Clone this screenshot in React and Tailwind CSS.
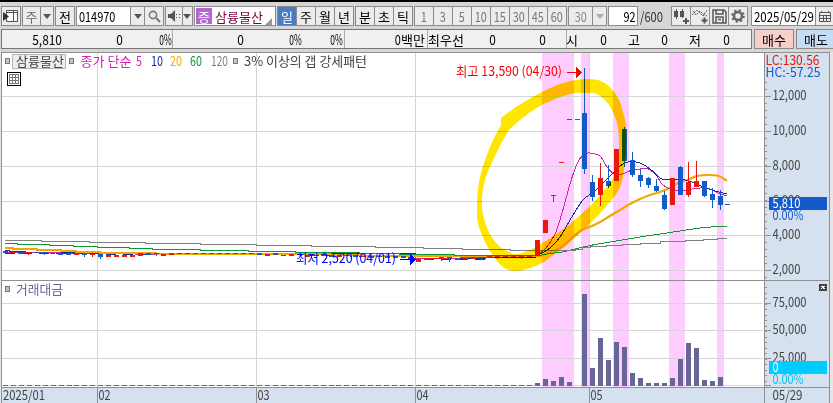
import React from "react";

const FONT = "font-['Noto_Sans_CJK_KR',sans-serif]";

// Smooth curve through a list of points
function curve(points, closed = false) {
  const n = points.length;
  const at = (i) => (closed ? points[(i + n) % n] : points[Math.max(0, Math.min(n - 1, i))]);
  let d = `M${points[0][0]} ${points[0][1]}`;
  for (let i = 0; i < (closed ? n : n - 1); i++) {
    const [a, b, c, e] = [at(i - 1), at(i), at(i + 1), at(i + 2)];
    d += `C${b[0] + (c[0] - a[0]) / 6} ${b[1] + (c[1] - a[1]) / 6} ${c[0] - (e[0] - b[0]) / 6} ${c[1] - (e[1] - b[1]) / 6} ${c[0]} ${c[1]}`;
  }
  return closed ? d + "Z" : d;
}

const steps = (points) =>
  points.map(([x, y], i) => (i ? `H${x}V${y}` : `M${x} ${y}`)).join("");

const RED = "#e8190c";
const BLUE = "#145acb";

// x, body top, body bottom, wick top, wick bottom, colour
const candles = [
  [535, 240, 255, 240, 255, RED],
  [543, 220, 233, 220, 233, RED],
  [582, 113, 169, 68, 174, BLUE],
  [590, 182, 197, 175, 201, BLUE],
  [598, 178, 195, 163, 206, RED],
  [606, 181, 186, 165, 188, BLUE],
  [614, 149, 181, 149, 181, RED],
  [622, 129, 161, 127, 167, BLUE],
  [630, 160, 175, 152, 177, BLUE],
  [638, 175, 181, 169, 187, BLUE],
  [646, 178, 185, 177, 188, BLUE],
  [654, 186, 191, 179, 192, BLUE],
  [662, 195, 209, 191, 210, BLUE],
  [670, 178, 205, 178, 205, RED],
  [678, 167, 195, 166, 195, BLUE],
  [686, 182, 195, 162, 197, RED],
  [694, 181, 187, 161, 187, RED],
  [702, 181, 196, 181, 197, BLUE],
  [710, 194, 200, 188, 208, BLUE],
  [718, 196, 205, 190, 210, BLUE],
];

// Quiet period: x, y, height, colour, wick
const flat = [
  [3, 251, 2, BLUE], [10, 252, 1, RED], [18, 252, 2, BLUE], [26, 252, 1, RED, 2], [34, 252, 1, BLUE], [42, 252, 1, BLUE, 2],
  [50, 253, 1, BLUE], [58, 253, 2, BLUE], [66, 253, 2, BLUE], [74, 253, 2, RED], [82, 254, 1, BLUE, 2], [90, 254, 1, RED, 2],
  [98, 254, 3, BLUE, 2], [106, 255, 2, RED], [114, 255, 2, RED], [122, 255, 2, RED], [130, 255, 2, RED], [138, 253, 3, RED],
  [146, 253, 2, BLUE], [154, 253, 1, BLUE, 2], [161, 254, 2, RED], [169, 253, 2, RED], [177, 253, 1, BLUE], [185, 253, 1, BLUE],
  [193, 253, 1, RED], [201, 253, 1, RED], [209, 253, 1, BLUE], [217, 253, 1, RED], [225, 253, 1, BLUE], [233, 253, 1, BLUE],
  [241, 253, 1, RED], [249, 253, 1, BLUE], [257, 253, 2, BLUE], [265, 254, 2, RED], [273, 253, 2, BLUE], [281, 255, 1, BLUE],
  [289, 254, 2, RED], [297, 254, 1, BLUE], [305, 255, 2, RED], [313, 255, 1, RED], [321, 254, 2, BLUE], [329, 255, 2, BLUE],
  [337, 255, 2, RED], [345, 255, 1, BLUE], [353, 255, 2, BLUE], [361, 256, 1, RED], [369, 256, 2, BLUE], [377, 256, 1, BLUE],
  [385, 256, 2, BLUE], [393, 256, 2, BLUE], [401, 256, 2, BLUE], [408, 257, 3, BLUE], [416, 259, 3, RED], [424, 258, 2, RED],
  [432, 258, 1, RED], [439, 257, 2, RED, 2], [447, 257, 2, BLUE, 3], [455, 258, 2, BLUE], [463, 258, 1, RED], [471, 257, 2, RED],
  [479, 257, 1, RED, 2], [487, 256, 2, RED], [495, 256, 1, RED, 2], [503, 256, 1, RED], [511, 256, 1, RED], [519, 256, 1, RED, 2],
  [527, 255, 2, RED],
];

const volumes = [
  [519, 385], [527, 385], [535, 383], [543, 379], [551, 381], [559, 377], [567, 382], [582, 294],
  [590, 368], [598, 338], [606, 360], [614, 342], [622, 347], [630, 373], [638, 378],
  [646, 383], [654, 383], [662, 383], [670, 378], [678, 359], [686, 343], [694, 348],
  [702, 380], [710, 381], [718, 377],
];

const bands = [[542, 32], [581, 8], [613, 16], [669, 16], [717, 7]];
const priceGrid = [[96, "12,000"], [131, "10,000"], [166, "8,000"], [201, "6,000"], [235, "4,000"], [270, "2,000"]];
const volumeGrid = [[303, "75,000"], [330, "50,000"], [358, "25,000"]];
const months = [[97, "02"], [256, "03"], [415, "04"], [589, "05"]];

const marker = [
  [501, 118], [519, 105], [542, 92], [563, 83], [585, 79], [603, 82], [617, 96], [623, 112], [626, 127],
  [626, 145], [625, 160], [620, 187], [603, 210], [580, 233], [560, 250], [542, 263], [530, 268], [516, 271],
  [503, 267], [490, 251], [479, 227], [477, 207], [480, 177], [490, 147], [501, 125],
];
const markerInner = [
  [513, 126], [540, 106], [570, 94], [585, 93], [597, 94], [609, 105], [617, 123], [619, 143], [618, 160],
  [613, 178], [602, 193], [590, 206], [570, 224], [555, 235], [542, 243], [530, 250], [517, 254], [509, 252],
  [498, 245], [488, 230], [482, 207], [485, 180], [497, 152], [505, 137],
];

const ma5 = [[535, 256], [545, 249], [555, 234], [562, 213], [570, 184], [577, 164], [583, 155], [588, 153], [595, 154], [601, 157], [607, 167], [613, 173], [622, 174], [632, 170], [640, 169], [648, 169], [656, 175], [662, 184], [668, 188], [678, 191], [686, 190], [700, 188], [710, 189], [718, 193], [727, 196]];
const ma10 = [[540, 254], [550, 248], [560, 237], [570, 220], [580, 204], [585, 198], [595, 191], [602, 184], [612, 174], [620, 166], [628, 162], [640, 163], [650, 169], [660, 178], [665, 180], [675, 179], [685, 180], [695, 183], [703, 187], [715, 191], [727, 194]];
const ma20 = [[540, 256], [551, 252], [562, 247], [572, 238], [582, 230], [592, 226], [600, 222], [610, 216], [620, 210], [630, 204], [640, 199], [650, 195], [660, 192], [670, 188], [678, 183], [690, 179], [697, 176], [708, 175], [719, 176], [727, 181]];

function Label({ x, y, w, fill = "#444", size = 13, children }) {
  return (
    <text x={x} y={y} textLength={w} lengthAdjust="spacingAndGlyphs" fill={fill} fontSize={size}>
      {children}
    </text>
  );
}

function Bullet({ x, y }) {
  return <rect x={x + 0.5} y={y + 0.5} width="4" height="5" fill="#c4c4c4" stroke="#777" />;
}

function Ticks({ from, to, step }) {
  const ys = [];
  for (let y = from; y <= to; y += step) ys.push(Math.round(y));
  return ys.map((y) => <rect key={y} x="765" y={y} width="2" height="1" fill="#909090" />);
}

function Chart() {
  return (
    <svg width="833" height="351" viewBox="0 52 833 351" shapeRendering="crispEdges" className={`block shrink-0 ${FONT}`}>
      <rect x="0" y="52" width="833" height="351" fill="#e6e6e6" />
      <rect x="2" y="53" width="762" height="334" fill="#fff" />
      {bands.map(([x, w]) => <rect key={x} x={x} y="53" width={w} height="334" fill="#ffccff" />)}
      <g fill="#d5d5d5">
        {[...priceGrid, ...volumeGrid, [385]].map(([y]) => <rect key={y} x="2" y={y} width="761" height="1" />)}
        {months.map(([x]) => <rect key={x} x={x} y="53" width="1" height="334" />)}
      </g>
      <rect x="765" y="53" width="64" height="350" fill="#d6e1ef" />
      <rect x="2" y="388" width="762" height="15" fill="#d6e1ef" />

      <g fill="#666699">
        {Array.from({ length: 65 }, (_, i) => <rect key={i} x={Math.round(3 + i * 7.94)} y="385" width="5" height="1" />)}
        {volumes.map(([x, y]) => <rect key={x} x={x} y={y} width="5" height={386 - y} />)}
      </g>

      <g fill="none">
        <path stroke="#1a2aa0" d="M5 250H9V251H25V252H90V253H415V258H485V257H535V256" />
        <path stroke="#d41fb4" d="M8 252H60V253H135V254H330V255H415V258H460V257H500V256H535" />
        <path stroke="#1a2aa0" strokeDasharray="10 7" d="M5 253H99V254H160V254H300V255H350V256H410V259H485V257H535" />
        <path stroke="#f0a800" strokeWidth="2" d={steps([[5, 248], [13, 248], [13, 249], [37, 250], [61, 251], [76, 252], [100, 253], [156, 254], [256, 254], [330, 255], [365, 256], [440, 256], [540, 256]])} />
        <path stroke="#f0a800" strokeWidth="2.2" shapeRendering="auto" d={curve(ma20)} />
        <path stroke="#0d9838" d={steps([[5, 243.5], [17, 244.5], [49, 245.5], [73, 246.5], [97, 247.5], [129, 248.5], [152, 249.5], [200, 250.5], [248, 251.5], [295, 252.5], [359, 253.5], [399, 254.5], [454, 255.5], [540, 255.5]])} />
        <path stroke="#0d9838" d={curve([[540, 255.5], [550, 253.5], [562, 252], [575, 249], [590, 245.5], [610, 242], [640, 237], [660, 234], [680, 231], [700, 228], [718, 226.5], [727, 226.5]])} />
        <path stroke="#808080" d={steps([[5, 240.5], [41, 241.5], [89, 242.5], [145, 243.5], [200, 244.5], [256, 245.5], [311, 246.5], [375, 247.5], [423, 248.5], [462, 249.5], [510, 250.5], [575, 249.5], [582, 247.5], [590, 246.5], [606, 245.5], [622, 244.5], [640, 243.5], [660, 241.5], [685, 240.5], [703, 239.5], [717, 238.5], [727, 238.5]])} />
        <path stroke="#d41fb4" d={curve(ma5)} />
        <path stroke="#1a2aa0" d={curve(ma10)} />
      </g>

      {flat.map(([x, y, h, color, wick]) => (
        <g key={x} fill={color}>
          <rect x={x} y={y} width="5" height={h} />
          {wick && <rect x={x + 2} y={y} width="1" height={h + wick} />}
        </g>
      ))}
      {candles.map(([x, top, bottom, high, low, color]) => (
        <g key={x} fill={color}>
          <rect x={x + 2} y={high} width="1" height={low - high} />
          <rect x={x} y={top} width="5" height={bottom - top} />
        </g>
      ))}
      <g fill={RED}>
        <rect x="551" y="195" width="5" height="1" />
        <rect x="553" y="195" width="1" height="7" />
        <rect x="559" y="162" width="5" height="1" />
        <rect x="567" y="119" width="5" height="1" />
        <rect x="575" y="119" width="5" height="1" />
      </g>
      <rect x="725" y="204" width="5" height="1" fill={BLUE} />

      <path
        d={`${curve(marker)}Z ${curve(markerInner, true)}`}
        fill="#ffe600" fillRule="evenodd" shapeRendering="auto" className="mix-blend-multiply"
      />

      <g fill="#909090">
        <rect x="1" y="52" width="829" height="1" />
        <rect x="1" y="52" width="1" height="351" />
        <rect x="764" y="52" width="1" height="351" />
        <rect x="829" y="52" width="1" height="351" />
        <rect x="2" y="280" width="828" height="1" />
        <rect x="2" y="387" width="828" height="1" />
        {months.map(([x]) => <rect key={x} x={x} y="388" width="1" height="15" />)}
        {[...priceGrid, ...volumeGrid, [385]].map(([y]) => <rect key={y} x="765" y={y} width="6" height="1" />)}
        <Ticks from={82} to={279} step={6.95} />
        <Ticks from={287} to={384} step={5.5} />
      </g>

      {[...priceGrid, ...volumeGrid].map(([y, t]) => (
        <Label key={t} x={772.5} y={y + 4} w={t.length === 6 ? 34 : 28}>{t}</Label>
      ))}
      <Label x={765.5} y={65} w={54} fill={RED}>LC:130.56</Label>
      <Label x={765.5} y={77} w={55} fill={BLUE}>HC:-57.25</Label>
      <rect x="769" y="197" width="58" height="13" fill={BLUE} />
      <Label x={772.5} y={208} w={28} fill="#fff">5,810</Label>
      <Label x={772.5} y={220} w={31} fill={BLUE}>0.00%</Label>
      <rect x="769" y="361" width="58" height="13" fill="#00ccff" />
      <Label x={772.5} y={372} w={6} fill="#fff">0</Label>
      <Label x={772.5} y={384} w={31} fill="#00c4f4">0.00%</Label>
      <rect x="819" y="284" width="8" height="7" fill="#444" />
      <path d="M821 286l4 3m0-3l-4 3" stroke="#fff" />

      <Label x={3} y={400} w={42}>2025/01</Label>
      {months.map(([x, t]) => <Label key={t} x={x + 1.5} y={400} w={12}>{t}</Label>)}
      <Label x={772.5} y={400} w={30}>05/29</Label>

      <Bullet x={5} y={58} />
      <rect x="12.5" y="54.5" width="53" height="14" fill="#ececec" stroke="#b8b8b8" />
      <Label x={16} y={66} w={48}>삼륭물산</Label>
      <Bullet x={69} y={58} />
      <Label x={80.5} y={66} w={51} fill="#d41fb4">종가 단순</Label>
      <Label x={136} y={66} w={6} fill="#d41fb4">5</Label>
      <Label x={151} y={66} w={12} fill="#1a2aa0">10</Label>
      <Label x={170} y={66} w={12} fill="#f0a800">20</Label>
      <Label x={190} y={66} w={12} fill="#0d9838">60</Label>
      <Label x={211} y={66} w={17} fill="#808080">120</Label>
      <Bullet x={233} y={58} />
      <Label x={244} y={66} w={123}>3% 이상의 갭 강세패턴</Label>
      <rect x="7.5" y="72.5" width="13" height="13" fill="#fff" stroke="#000" />
      <path d="M9.5 74.5h9v9h-9zM9.5 77.5h9M9.5 80.5h9M12.5 74.5v9M15.5 74.5v9" fill="none" stroke="#777" />

      <Label x={456} y={76} w={106} fill="#f00">최고 13,590 (04/30)</Label>
      <path d="M567 72.5h10" stroke="#f00" />
      <path d="M576 67l6 5.5l-6 5.5z" fill="#f00" />
      <Label x={296} y={263} w={100} fill="#00f">최저 2,520 (04/01)</Label>
      <path d="M400 259.5h11" stroke="#00f" />
      <path d="M410 254l6 5.5l-6 5.5z" fill="#00f" />
      <Bullet x={5} y={286} />
      <Label x={16} y={294} w={47} fill="#666699">거래대금</Label>
    </svg>
  );
}

function Group({ className = "", children }) {
  return <div className={`flex h-5 shrink-0 divide-x divide-[#8b8b8b] border border-[#8b8b8b] bg-[#ececec] ${className}`}>{children}</div>;
}

function Cell({ className = "", children }) {
  return <div className={`flex min-w-0 flex-1 items-center justify-center ${className}`}>{children}</div>;
}

// Condensed figures, as the terminal's narrow typeface has
function Num({ className = "scale-x-[.78]", children }) {
  return <span className={`inline-block text-[14px] whitespace-nowrap ${className}`}>{children}</span>;
}

function Caret({ light }) {
  return <svg width="8" height="5" viewBox="0 0 8 5" className="shrink-0"><path d="M0 0h8L4 5z" fill={light ? "#aaa" : "#555"} /></svg>;
}

function Toolbar() {
  return (
    <div className="flex h-[27px] shrink-0 items-start border-t-2 border-black pt-1 pl-px text-[13px] leading-none">
      <Group className="w-5">
        <Cell>
          <svg width="16" height="16" viewBox="0 0 16 16"><path d="M3.500 2.500h11v11h-11z" fill="#fff" stroke="#555" /><path d="M3.500 4.500h11M10.500 3v10" stroke="#555" fill="none" /><path d="M0 4l6 4.500L0 13z" fill="#333" /></svg>
        </Cell>
      </Group>
      <Group className="ml-px w-8"><Cell className="flex-[18] text-[#666]">주</Cell><Cell className="flex-[13]"><Caret /></Cell></Group>
      <Group className="ml-px w-5"><Cell>전</Cell></Group>
      <Group className="ml-px w-[88px]">
        <div className="flex w-[54px] items-center bg-white pl-0.5"><Num className="origin-left scale-x-[.78]">014970</Num></div>
        <div className="flex w-[14px] items-center justify-center"><Caret /></div>
        <Cell><svg width="13" height="13" viewBox="0 0 13 13" fill="none" stroke="#777"><circle cx="5" cy="5" r="3.6" strokeWidth="1.6" /><path d="M8 8l4 4" strokeWidth="2" /></svg></Cell>
      </Group>
      <Group className="ml-px w-7">
        <Cell className="flex-[17]"><svg width="14" height="14" viewBox="0 0 14 14" fill="#555"><path d="M1 5h3l4-4v12L4 9H1zM9 5h1v1H9zM12 5h1v1h-1zM9 8h1v1H9zM12 8h1v1h-1z" /></svg></Cell>
        <Cell className="flex-[10]"><Caret /></Cell>
      </Group>
      <Group className="ml-px w-[82px]">
        <div className="flex flex-1 items-center gap-[3px] bg-white pl-px">
          <span className="flex h-[16px] w-4 items-center justify-center bg-[#b564d4] text-white">증</span>
          <span className="whitespace-nowrap text-[#7a003c]">삼륭물산</span>
          <svg width="7" height="7" viewBox="0 0 7 7" className="-ml-px shrink-0 self-end"><path d="M7 0v7H0z" fill="#999" /></svg>
        </div>
      </Group>
      <Group className="ml-px w-[77px]"><Cell className="bg-[#4a7cc4] text-white">일</Cell><Cell>주</Cell><Cell>월</Cell><Cell>년</Cell></Group>
      <Group className="ml-px w-[58px]"><Cell>분</Cell><Cell>초</Cell><Cell>틱</Cell></Group>
      <Group className="ml-px w-[153px] text-[#777]">
        {["1", "3", "5", "10", "15", "30", "45", "60"].map((t) => <Cell key={t}><Num>{t}</Num></Cell>)}
      </Group>
      <Group className="ml-px w-[39px] text-[#888]"><Cell className="flex-[24]"><Num>30</Num></Cell><Cell className="flex-[13]"><Caret light /></Cell></Group>
      <Group className="ml-px w-[30px]"><div className="flex flex-1 items-center justify-end bg-white pr-px"><Num className="origin-right scale-x-[.78]">92</Num></div></Group>
      <div className="ml-[2px] w-[31px] shrink-0 pt-[3px] text-[#333]"><Num className="origin-left scale-x-[.8]">/600</Num></div>
      <Group className="w-[77px]">
        <Cell><svg width="16" height="16" viewBox="0 0 16 16" fill="#555"><path d="M1 3h4v6H1zM3 1h1v10H3zM7 3h4v6H7zM9 1h1v9H9zM10 12h6v2h-6zM12 10h2v6h-2z" /></svg></Cell>
        <Cell><svg width="16" height="16" viewBox="0 0 16 16" fill="none" stroke="#555"><path d="M0 7l5-5 6 6 4-6M1 3l3 4 4-4 3 3 4 2" strokeDasharray="2 1" /><path d="M12.500 9.500v6M9.500 12.500h6" strokeWidth="2" /></svg></Cell>
        <Cell><svg width="15" height="15" viewBox="0 0 15 15" fill="none" stroke="#555" strokeWidth="1.500"><path d="M1 1h11l2 2v11H1zM4 1v4h7V1M4 14V8h7v6M6 10.500h3" /></svg></Cell>
        <Cell><svg width="14" height="14" viewBox="0 0 14 14" fill="none" stroke="#666"><circle cx="7" cy="7" r="4" strokeWidth="2.500" /><circle cx="7" cy="7" r="5.800" strokeWidth="2" strokeDasharray="2.200 2.355" /></svg></Cell>
      </Group>
      <Group className="ml-[3px] w-[84px]">
        <div className="flex w-[64px] shrink-0 items-center bg-white pl-0.5"><Num className="w-0 origin-left scale-x-[.82]">2025/05/29</Num></div>
        <Cell><svg width="12" height="11" viewBox="0 0 12 11" fill="none" stroke="#555"><path d="M.5 1.500h11v9H.5zM.5 4.500h11M.5 7.500h11M4.500 4v6M7.500 4v6M2.500 0v2M9.500 0v2" /></svg></Cell>
      </Group>
    </div>
  );
}

// Width of each column and its right-aligned value; true draws a divider
const quotes = [
  [60, "5,810"], [61, "0"], [49, "0%"], [1, "", true], [71, "0"], [58, "0%"], [41, "0%"], [2, "", true],
  [80, "백만"], [3, "", true], [36, "최우선"], [32, "0"], [50, "0"], [21, "", true], [11, "시"],
  [29, "0"], [33, "고"], [28, "0"], [33, "저"], [29, "0"],
];

function QuoteBar() {
  return (
    <div className="flex h-[25px] shrink-0 items-start gap-0.5 pt-0.5 pl-px text-[13px] leading-none">
      <div className="flex h-[20px] w-[751px] shrink-0 border border-[#777] bg-[#f0f0f0]">
        {quotes.map(([w, text, rule], i) => (
          <div key={i} style={{ width: w }} className={`flex shrink-0 items-center justify-end whitespace-nowrap ${rule ? "border-r border-[#aaa]" : ""}`}>
            {text === "백만" && <Num className="origin-right scale-x-[.78]">0</Num>}
            {/[가-힣]/.test(text) ? <span>{text}</span>
              : text.endsWith("%") ? <Num className="origin-right scale-x-[.6]">{text}</Num>
              : <Num className="origin-right scale-x-[.85]">{text}</Num>}
          </div>
        ))}
      </div>
      <div className="flex h-[20px] w-[40px] shrink-0 items-center justify-center border border-[#8b8b8b] bg-[#f6cfca]">매수</div>
      <div className="flex h-[20px] w-[40px] shrink-0 items-center justify-center border border-[#8b8b8b] bg-[#c6dcf4]">매도</div>
    </div>
  );
}

export default function App() {
  return (
    <div className={`flex h-[403px] w-[833px] flex-col overflow-hidden bg-[#d6d6d6] text-black ${FONT}`}>
      <Toolbar />
      <QuoteBar />
      <Chart />
    </div>
  );
}
